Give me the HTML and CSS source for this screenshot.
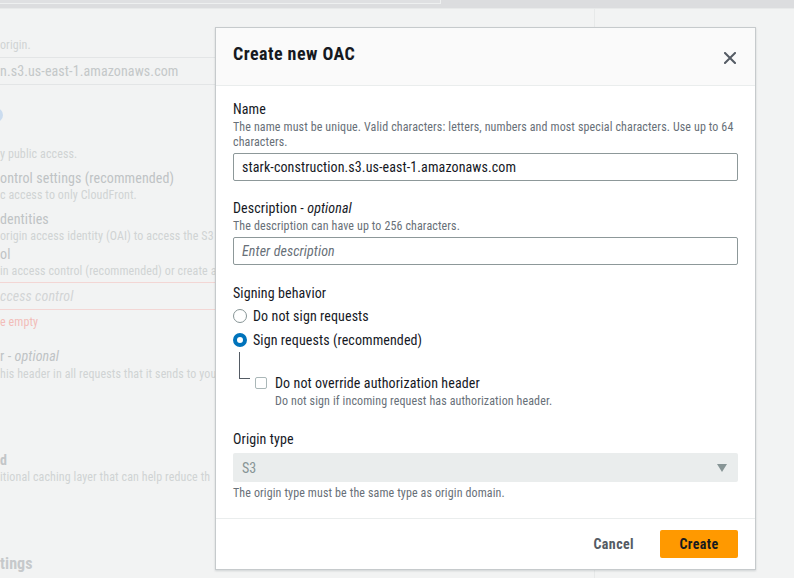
FILE: index.html
```html
<!DOCTYPE html>
<html lang="en">
<head>
<meta charset="utf-8">
<title>Create new OAC</title>
<link rel="stylesheet" href="styles.css">
</head>
<body>
<div class="topbar"><div class="topfield"></div></div>
<div class="page">
  <div class="main">
    <div class="bg-hint l1">origin.</div>
    <div class="bg-input">n.s3.us-east-1.amazonaws.com</div>
    <div class="bg-radio"></div>
    <div class="bg-hint l4">y public access.</div>
    <div class="bg-title l5">ontrol settings (recommended)</div>
    <div class="bg-hint">c access to only CloudFront.</div>
    <div class="bg-title l7">dentities</div>
    <div class="bg-hint">origin access identity (OAI) to access the S3 b</div>
    <div class="bg-title l9">ol</div>
    <div class="bg-hint">in access control (recommended) or create a</div>
    <div class="bg-input bg-error"><em>ccess control</em></div>
    <div class="bg-hint bg-red l12">e empty</div>
    <div class="bg-title l13">r - <em>optional</em></div>
    <div class="bg-hint l14">his header in all requests that it sends to you</div>
    <div class="bg-title bg-strong l15">d</div>
    <div class="bg-hint">itional caching layer that can help reduce th</div>
    <div class="bg-heading l17">tings</div>
  </div>
  <div class="side"></div>
</div>

<div class="modal" role="dialog" aria-labelledby="modal-title">
  <div class="modal-header">
    <h2 id="modal-title" class="modal-title">Create new OAC</h2>
    <button class="close" aria-label="Close">
      <svg width="12" height="12" viewBox="0 0 12 12"><path d="M1 1 L11 11 M11 1 L1 11" stroke="#545b64" stroke-width="2" fill="none" stroke-linecap="square"/></svg>
    </button>
  </div>
  <div class="modal-body">
    <div class="field">
      <div class="label">Name</div>
      <div class="hint">The name must be unique. Valid characters: letters, numbers and most special characters. Use up to 64 characters.</div>
      <div class="input">stark-construction.s3.us-east-1.amazonaws.com</div>
    </div>
    <div class="field f-desc">
      <div class="label">Description - <em>optional</em></div>
      <div class="hint">The description can have up to 256 characters.</div>
      <div class="input placeholder">Enter description</div>
    </div>
    <div class="field f-sign">
      <div class="label">Signing behavior</div>
      <div class="radio-row"><span class="radio"></span><span>Do not sign requests</span></div>
      <div class="radio-row"><span class="radio checked"></span><span>Sign requests (recommended)</span></div>
      <div class="nested">
        <div class="connector"></div>
        <div class="nested-content">
          <div class="check-row"><span class="checkbox"></span><span>Do not override authorization header</span></div>
          <div class="hint check-hint">Do not sign if incoming request has authorization header.</div>
        </div>
      </div>
    </div>
    <div class="field f-origin">
      <div class="label">Origin type</div>
      <div class="select"><span>S3</span><span class="caret"></span></div>
      <div class="hint select-hint">The origin type must be the same type as origin domain.</div>
    </div>
  </div>
  <div class="modal-footer">
    <button class="btn-link">Cancel</button>
    <button class="btn-primary">Create</button>
  </div>
</div>
</body>
</html>
```
FILE: styles.css
```css
* { box-sizing: border-box; }
html, body { margin: 0; padding: 0; }
body {
  width: 794px;
  height: 578px;
  overflow: hidden;
  background: #f2f3f3;
  font-family: "Roboto Condensed", Roboto, "Liberation Sans", Arial, sans-serif;
  letter-spacing: 0.1px;
  color: #16191f;
  font-size: 14px;
}
.topbar {
  height: 9px;
  background: #dcdddf;
  border-bottom: 1px solid #e8eaea;
}
.topfield {
  width: 441px;
  height: 4px;
  background: #dfe0e2;
  border-right: 1px solid #eef0f0;
  border-bottom: 1px solid #eef0f0;
}
.page {
  display: flex;
  height: 569px;
}
.main {
  width: 595px;
  border-right: 1px solid #e7e9e9;
  overflow: hidden;
  padding-top: 28px;
  color: #c4c8c9;
}
.side { flex: 1; }
.bg-hint {
  font-size: 12px;
  line-height: 17px;
  color: #d0d3d4;
  white-space: nowrap;
}
.bg-title {
  font-size: 14px;
  line-height: 17px;
  color: #bfc3c5;
  white-space: nowrap;
}
.bg-strong { font-weight: 700; color: #c3c6c8; }
.bg-heading {
  font-size: 16px;
  line-height: 20px;
  font-weight: 700;
  color: #c6c9cb;
  white-space: nowrap;
}
.bg-input {
  margin-top: 4px;
  height: 28px;
  width: 700px;
  border-top: 1px solid #e3e5e6;
  border-bottom: 1px solid #e3e5e6;
  font-size: 14px;
  line-height: 27px;
  color: #c4c8c9;
  white-space: nowrap;
}
.bg-error {
  margin-top: 2px;
  border-color: #f3d6d4;
  color: #d2d5d6;
}
.bg-red { color: #f2bdb9; }
.l1 { line-height: 16px; }
.bg-radio {
  margin-top: 23px;
  margin-left: -11px;
  width: 14px;
  height: 14px;
  border-radius: 50%;
  border: 4px solid #cbdcef;
  background: #f7f8f8;
}
.l4 { margin-top: 24px; }
.l5 { margin-top: 7px; }
.l7 { margin-top: 7px; }
.l9 { margin-top: 1px; }
.l12 { margin-top: 4px; }
.l13 { margin-top: 17px; }
.l14 { margin-top: 1px; }
.l15 { margin-top: 69px; }
.l17 { margin-top: 68px; }

/* Modal */
.modal {
  position: absolute;
  left: 215px;
  top: 27px;
  width: 541px;
  background: #ffffff;
  border: 1px solid #c6cacc;
  box-shadow: 0 1px 2px rgba(0, 28, 36, 0.15);
}
.modal-header {
  height: 58px;
  background: #fafafa;
  border-bottom: 1px solid #eaeded;
  display: flex;
  align-items: center;
  justify-content: space-between;
  padding: 0 17px;
}
.modal-title {
  margin: 0 0 5px 0;
  font-size: 18px;
  line-height: 22px;
  font-weight: 700;
  letter-spacing: 0.45px;
  color: #16191f;
}
.close {
  width: 16px;
  height: 16px;
  padding: 0;
  border: 0;
  background: none;
  display: flex;
  align-items: center;
  justify-content: center;
  margin-top: 2px;
}
.modal-body {
  padding: 12px 17px 17px;
}
.label {
  font-size: 14px;
  line-height: 22px;
  color: #16191f;
}
.hint {
  font-size: 12px;
  line-height: 15px;
  letter-spacing: 0.12px;
  color: #687078;
}
.input {
  margin-top: 3px;
  height: 28px;
  border: 1px solid #8d9899;
  border-radius: 2px;
  padding: 0 8px;
  font-size: 14px;
  line-height: 26px;
  color: #16191f;
}
.placeholder { font-style: italic; color: #687078; }
.f-desc { margin-top: 16px; }
.f-sign { margin-top: 17px; }
.f-origin { margin-top: 19px; }
.radio-row {
  height: 24px;
  display: flex;
  align-items: center;
  gap: 6px;
  font-size: 14px;
}
.radio {
  width: 14px;
  height: 14px;
  border-radius: 50%;
  border: 1px solid #879596;
  background: #fff;
}
.radio.checked { border: 4px solid #0073bb; }
.nested {
  display: flex;
}
.connector {
  margin-left: 6px;
  width: 11px;
  height: 27px;
  border-left: 1px solid #545b64;
  border-bottom: 1px solid #545b64;
}
.nested-content {
  margin-left: 5px;
  padding-top: 20px;
}
.check-row {
  height: 22px;
  display: flex;
  align-items: center;
  gap: 8px;
  font-size: 14px;
}
.checkbox {
  width: 12px;
  height: 12px;
  border: 1px solid #aab7b8;
  border-radius: 2px;
  background: #fff;
}
.check-hint { padding-left: 20px; }
.select {
  margin-top: 3px;
  height: 29px;
  background: #eaeded;
  border-radius: 2px;
  padding: 0 11px 0 9px;
  display: flex;
  align-items: center;
  justify-content: space-between;
  color: #879596;
  font-size: 14px;
}
.caret {
  width: 0;
  height: 0;
  border-left: 5px solid transparent;
  border-right: 5px solid transparent;
  border-top: 8px solid #879596;
}
.select-hint { margin-top: 4px; }
.modal-footer {
  border-top: 1px solid #eaeded;
  padding: 11px 17px 11px;
  display: flex;
  justify-content: flex-end;
  align-items: center;
  gap: 6px;
}
.btn-link {
  height: 28px;
  padding: 0 20px;
  border: 0;
  background: none;
  font-family: inherit;
  letter-spacing: 0.4px;
  font-size: 14px;
  font-weight: 700;
  color: #545b64;
}
.btn-primary {
  height: 28px;
  width: 78px;
  padding: 0;
  border: 0;
  border-radius: 2px;
  background: #ff9900;
  font-family: inherit;
  letter-spacing: 0.4px;
  font-size: 14px;
  font-weight: 700;
  color: #16191f;
}
```
